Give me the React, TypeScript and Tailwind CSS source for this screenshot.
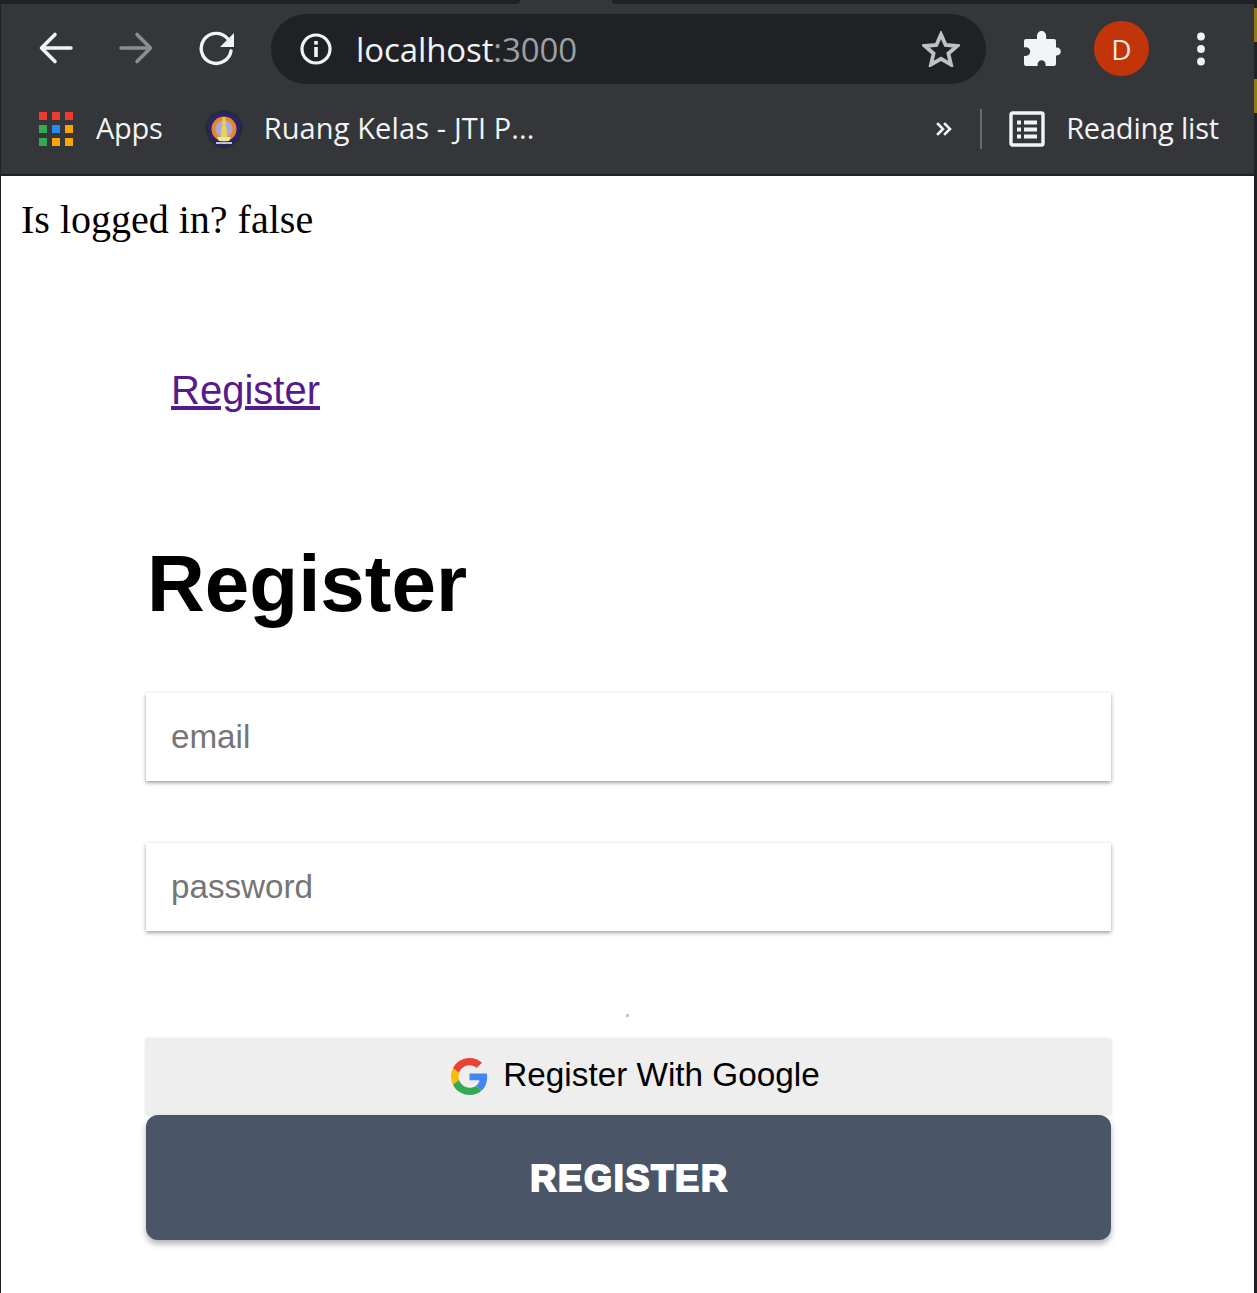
import React from "react";

const ui = "font-['Open_Sans','Noto_Sans',sans-serif]";
const arial = "font-['Liberation_Sans',Arial,sans-serif]";

function Back({ color }: { color: string }) {
  return (
    <svg width="36" height="36" viewBox="0 0 36 36" fill="none" stroke={color} strokeWidth="3.6" strokeLinecap="round" strokeLinejoin="round">
      <path d="M33 18H4M17 4.5 3.5 18 17 31.5" />
    </svg>
  );
}

function Forward({ color }: { color: string }) {
  return (
    <svg width="36" height="36" viewBox="0 0 36 36" fill="none" stroke={color} strokeWidth="3.6" strokeLinecap="round" strokeLinejoin="round">
      <path d="M3 18h29M19 4.5 32.5 18 19 31.5" />
    </svg>
  );
}

function Reload() {
  return (
    <svg width="36" height="38" viewBox="0 0 36 38" fill="none">
      <path d="M28.5 9.5A15 15 0 1 0 32 22" stroke="#f1f3f4" strokeWidth="3.4" strokeLinecap="round" />
      <path d="M35 4v14H21z" fill="#f1f3f4" />
    </svg>
  );
}

function Info() {
  return (
    <svg width="32" height="32" viewBox="0 0 32 32" fill="none">
      <circle cx="16" cy="16" r="14" stroke="#f1f3f4" strokeWidth="3.2" />
      <rect x="14.2" y="14" width="3.6" height="10" fill="#f1f3f4" />
      <rect x="14.2" y="8" width="3.6" height="3.6" fill="#f1f3f4" />
    </svg>
  );
}

function Star() {
  return (
    <svg width="38" height="36" viewBox="0 0 38 36" fill="none">
      <path d="M19 3.5 23.6 14l11.4 1-8.6 7.5 2.6 11.1L19 27.8 9 33.6l2.6-11.1L3 15l11.4-1z" stroke="#bdc1c6" strokeWidth="3.8" strokeLinejoin="miter" />
    </svg>
  );
}

function Puzzle() {
  return (
    <svg width="37" height="37" viewBox="0 0 37 37" fill="#f1f3f4">
      <path d="M13 6.5C13 3 15.2 1 17.6 1s4.6 2 4.6 5.5V9H30a2 2 0 0 1 2 2v6.6h1c2.3 0 3.8 1.8 3.8 3.9s-1.5 3.9-3.8 3.9h-1V34a2 2 0 0 1-2 2h-8.4v-1.6c0-2.4-1.8-4.2-4-4.2s-4 1.8-4 4.2V36H2a2 2 0 0 1-2-2v-8h1.8c2.6 0 4.4-2 4.4-4.4s-1.8-4.4-4.4-4.4H0V11a2 2 0 0 1 2-2h11z" />
    </svg>
  );
}

function Dots() {
  return (
    <svg width="10" height="34" viewBox="0 0 10 34" fill="#f1f3f4">
      <circle cx="5" cy="4.5" r="3.9" />
      <circle cx="5" cy="17" r="3.9" />
      <circle cx="5" cy="29.5" r="3.9" />
    </svg>
  );
}

function AppsGrid() {
  const colors = ["#ef3a33", "#ef3a33", "#ef3a33", "#34a853", "#2a8cf0", "#f9a400", "#34a853", "#f9a400", "#f9a400"];
  return (
    <svg width="34" height="34" viewBox="0 0 34 34">
      {colors.map((c, i) => (
        <rect key={i} x={(i % 3) * 13} y={Math.floor(i / 3) * 13} width="8" height="8" fill={c} />
      ))}
    </svg>
  );
}

function Emblem() {
  return (
    <svg width="40" height="40" viewBox="0 0 40 40">
      <path d="M20 .5 33 5 39.5 16 36 30 27 38 20 39.5 13 38 4 30 .5 16 7 5z" fill="#2a2a33" />
      <path d="M20 2.5 32 7 37 16 34 29 26 36.5H14L6 29 3 16 8 7z" fill="#272468" />
      <circle cx="20" cy="20" r="12.5" fill="#e5872b" />
      <circle cx="20" cy="20" r="8.5" fill="#aaa7dc" />
      <path d="M19 8h2l2.5 20h-7z" fill="#e8cf57" />
      <path d="M13 28h14l-2 4H15z" fill="#f1e6a0" />
      <path d="M12 33.2h16v1.6H12z" fill="#e9e9f2" />
    </svg>
  );
}

function Chevrons() {
  return (
    <svg width="16" height="14" viewBox="0 0 16 14" fill="none" stroke="#f1f3f4" strokeWidth="2.6" strokeLinecap="square">
      <path d="M2 2l5 5-5 5M9 2l5 5-5 5" />
    </svg>
  );
}

function Reading() {
  return (
    <svg width="36" height="36" viewBox="0 0 36 36" fill="none">
      <rect x="2" y="2" width="32" height="32" rx="1.5" stroke="#f1f3f4" strokeWidth="3.4" />
      <path d="M8 9.5h4v4H8zM8 16.5h4v4H8zM8 23.5h4v4H8zM15 9.5h13v4H15zM15 16.5h13v4H15zM15 23.5h13v4H15z" fill="#f1f3f4" />
    </svg>
  );
}

function GoogleG() {
  return (
    <svg width="37" height="37" viewBox="0 0 48 48" className="mt-[2px]">
      <path fill="#EA4335" d="M24 9.5c3.54 0 6.71 1.22 9.21 3.6l6.85-6.85C35.9 2.38 30.47 0 24 0 14.62 0 6.51 5.38 2.56 13.22l7.98 6.19C12.43 13.72 17.74 9.5 24 9.5z" />
      <path fill="#4285F4" d="M46.98 24.55c0-1.57-.15-3.09-.38-4.55H24v9.02h12.94c-.58 2.96-2.26 5.48-4.78 7.18l7.73 6c4.51-4.18 7.09-10.36 7.09-17.65z" />
      <path fill="#FBBC05" d="M10.53 28.59c-.48-1.45-.76-2.99-.76-4.59s.27-3.14.76-4.59l-7.98-6.19C.92 16.46 0 20.12 0 24c0 3.88.92 7.54 2.56 10.78l7.97-6.19z" />
      <path fill="#34A853" d="M24 48c6.48 0 11.93-2.13 15.89-5.81l-7.73-6c-2.15 1.45-4.92 2.3-8.16 2.3-6.26 0-11.57-4.22-13.47-9.91l-7.98 6.19C6.51 42.62 14.62 48 24 48z" />
    </svg>
  );
}

function Field({ label }: { label: string }) {
  return (
    <div className={`h-[88px] bg-white flex items-center pl-[25px] text-[33.2px] text-[#757575] shadow-[0_2px_4px_rgba(0,0,0,0.35),0_0_3px_rgba(0,0,0,0.06)] ${arial}`}>
      {label}
    </div>
  );
}

export default function App() {
  return (
    <div className="w-[1257px] h-[1293px] bg-[#202124] flex flex-col overflow-hidden relative">
      <div className="h-[4px] shrink-0 flex bg-[#35363a]">
        <div className="w-[520px] bg-[#202124] rounded-br-[10px]" />
        <div className="w-[92px]" />
        <div className="flex-1 bg-[#202124] rounded-bl-[10px]" />
      </div>
      <div className="absolute right-0 top-[8px] w-[3px] h-[34px] bg-[#8f7a16]" />
      <div className="absolute right-0 top-[79px] w-[3px] h-[34px] bg-[#8f7a16]" />
      <div className="flex-1 flex pl-px pr-[3px] min-h-0">
        <div className="flex-1 flex flex-col min-w-0">
          <header className={`h-[172px] shrink-0 bg-[#35363a] border-b-2 border-[#202124] flex flex-col text-white ${ui}`}>
            <div className="h-[90px] flex items-center pl-[37px] pb-[1px]">
              <div className="mb-[2px]"><Back color="#f1f3f4" /></div>
              <div className="ml-[44px] mb-[2px]"><Forward color="#8b8d90" /></div>
              <div className="ml-[45px] mb-[2px]"><Reload /></div>
              <div className="ml-[36px] w-[715px] h-[70px] rounded-[35px] bg-[#202124] flex items-center pl-[29px] pr-[26px]">
                <Info />
                <span className="ml-[24px] mt-[2px] text-[33px] tracking-[-0.1px] text-[#f1f3f4]">
                  localhost<span className="text-[#9aa0a6]">:3000</span>
                </span>
                <div className="ml-auto"><Star /></div>
              </div>
              <div className="ml-[38px]"><Puzzle /></div>
              <div className="ml-[33px] w-[55px] h-[55px] rounded-full bg-[#c2350a] flex items-center justify-center text-[28px] text-[#f3e6e0]">D</div>
              <div className="ml-[47px]"><Dots /></div>
            </div>
            <div className="h-[80px] flex items-center pl-[38px] pb-[10px] text-[29px] text-[#f1f3f4]">
              <AppsGrid />
              <span className="ml-[23px] mb-[2px] tracking-[-0.25px]">Apps</span>
              <div className="ml-[41px]"><Emblem /></div>
              <span className="ml-[20px] mb-[2px] tracking-[0.12px]">Ruang Kelas - JTI P...</span>
              <div className="ml-auto"><Chevrons /></div>
              <div className="ml-[28px] w-[2px] h-[40px] bg-[#6b6c6f]" />
              <div className="ml-[27px]"><Reading /></div>
              <span className="ml-[21px] mb-[2px] mr-[35px] tracking-[-0.2px]">Reading list</span>
            </div>
          </header>
          <main className="flex-1 bg-white min-h-0">
            <p className="pl-[20px] pt-[21px] text-[40px] leading-[46px] text-black font-['Liberation_Serif','Times_New_Roman',serif]">Is logged in? false</p>
            <div className={`ml-[145px] w-[965px] ${arial}`}>
              <a href="#" className="block ml-[25px] mt-[124px] text-[40px] leading-[46px] text-[#551a8b] underline">Register</a>
              <h1 className="ml-[1px] mt-[125px] text-[80px] leading-[92px] font-bold text-black">Register</h1>
              <div className="mt-[63px]"><Field label="email" /></div>
              <div className="mt-[62px]"><Field label="password" /></div>
              <div className="relative h-[108px]">
                <div className="absolute left-[480px] top-[83px] w-[3px] h-[3px] bg-[#c4c4c4]" />
              </div>
              <div className="h-[76px] bg-[#eeeeee] flex items-center justify-center gap-[15px] pl-[14px] pb-[4px] text-[33.3px] text-black shadow-[0_0_3px_rgba(0,0,0,0.18)]">
                <GoogleG />
                <span>Register With Google</span>
              </div>
              <button className="block w-full h-[125px] rounded-[12px] bg-[#4a5568] pt-[2px] pl-[2px] text-white text-[36px] font-bold tracking-[1.8px] [-webkit-text-stroke:2px_white] shadow-[0_4px_6px_rgba(0,0,0,0.3)]">REGISTER</button>
            </div>
          </main>
        </div>
      </div>
    </div>
  );
}
